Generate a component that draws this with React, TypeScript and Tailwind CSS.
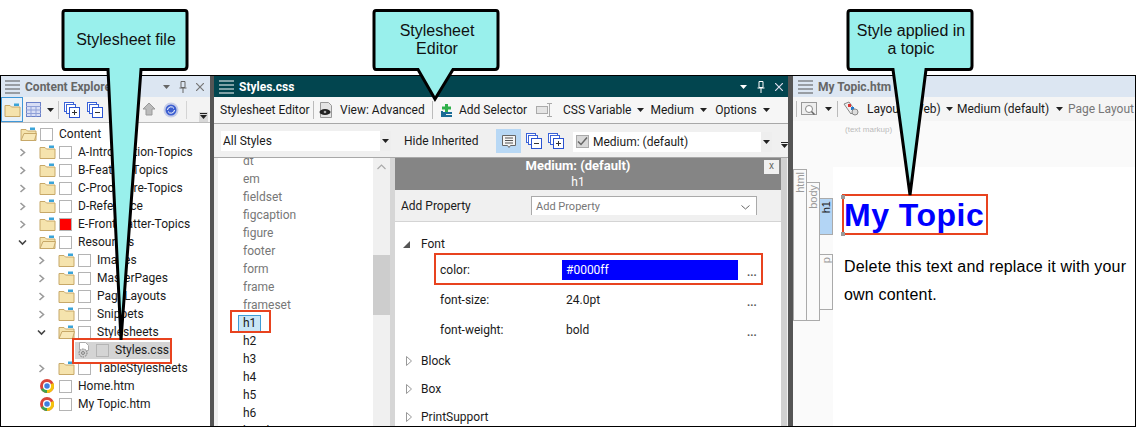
import React from 'react';

const ui = "font-['Roboto','Noto_Sans',sans-serif]";

const Folder = ({ open = false }: { open?: boolean }) => (
  <svg width="17" height="14" viewBox="0 0 17 14" className="shrink-0">
    <path d="M1 2.500h5l1.500 1.500H16v9.500H1z" fill="#f5e3ad" stroke="#c7a868" />
    {open && <path d="M1 13.500l3-7h12.500l-2 7z" fill="#f8e8b8" stroke="#c7a868" />}
    <rect x="10" y="0.500" width="5" height="2.500" fill="#3ba4d8" />
  </svg>
);

const Chevron = ({ down = false }: { down?: boolean }) => (
  <svg width="9" height="9" viewBox="0 0 9 9" className="shrink-0">
    {down ? (
      <path d="M1 2.500l3.500 3.500L8 2.500" fill="none" stroke="#444" strokeWidth="1.600" />
    ) : (
      <path d="M2.500 1L6.500 4.500 2.500 8" fill="none" stroke="#9a9a9a" strokeWidth="1.600" />
    )}
  </svg>
);

const Chrome = () => (
  <svg width="14" height="14" viewBox="0 0 14 14" className="shrink-0">
    <circle cx="7" cy="7" r="7" fill="#d9453a" />
    <path d="M7 7L1 10.500A7 7 0 0 0 7 14z" fill="#3fa34d" />
    <path d="M7 7l6.400-3A7 7 0 0 1 7 14z" fill="#f4c20d" />
    <circle cx="7" cy="7" r="3.400" fill="#3f7fe0" stroke="#fff" strokeWidth="1.300" />
  </svg>
);

const StackIcon = ({ sign }: { sign: '+' | '-' }) => (
  <svg width="16" height="16" viewBox="0 0 16 16" className="block shrink-0">
    <rect x="0.500" y="0.500" width="9" height="9" fill="#fff" stroke="#3a62d8" />
    <rect x="2.500" y="2.500" width="9" height="9" fill="#fff" stroke="#3a62d8" />
    <rect x="5.500" y="5.500" width="10" height="10" fill="#fff" stroke="#2a52d0" />
    <path d={sign === '+' ? 'M8 10.500h5M10.500 8v5' : 'M8 10.500h5'} stroke="#333" />
  </svg>
);

const Caret = ({ color = '#222' }: { color?: string }) => (
  <svg width="7" height="4" viewBox="0 0 7 4" className="block shrink-0">
    <path d="M0 0h7L3.500 4z" fill={color} />
  </svg>
);

const Hamburger = ({ color }: { color: string }) => (
  <svg width="15" height="14" viewBox="0 0 15 14" className="shrink-0">
    <path d="M0 1h15M0 5h15M0 9h15M0 13h15" stroke={color} />
  </svg>
);

const Overflow = () => (
  <svg width="7" height="7" viewBox="0 0 7 7" className="block shrink-0">
    <path d="M0 0h7v1H0zM0 2h7L3.500 6z" fill="#222" />
  </svg>
);

const Check = ({ fill }: { fill?: string }) => (
  <span className={`block w-[13px] h-[13px] border border-[#b4b4b4] shrink-0 ${fill ?? 'bg-white'}`} />
);

const tree = [
  { label: 'Content', depth: 0, open: true, noChevron: true },
  { label: 'A-Introduction-Topics', depth: 1 },
  { label: 'B-Feature-Topics', depth: 1 },
  { label: 'C-Procedure-Topics', depth: 1 },
  { label: 'D-Reference', depth: 1 },
  { label: 'E-FrontMatter-Topics', depth: 1, red: true },
  { label: 'Resources', depth: 1, open: true, expanded: true },
  { label: 'Images', depth: 2 },
  { label: 'MasterPages', depth: 2 },
  { label: 'PageLayouts', depth: 2 },
  { label: 'Snippets', depth: 2 },
  { label: 'Stylesheets', depth: 2, open: true, expanded: true },
];

const paddings = ['pl-[19px]', 'pl-[17px]', 'pl-[36px]'];

const TreeRow = ({ row }: { row: (typeof tree)[number] }) => (
  <div className={`h-[18px] flex items-center ${paddings[row.depth]}`}>
    {!row.noChevron && (
      <span className="w-[21px] flex shrink-0">
        <Chevron down={row.expanded} />
      </span>
    )}
    <Folder open={row.open} />
    <span className="w-[3px] shrink-0" />
    <Check fill={row.red ? 'bg-[#ff0000]' : undefined} />
    <span className="ml-[6px] whitespace-nowrap">{row.label}</span>
  </div>
);

const ContentExplorer = () => (
  <div className="w-[209px] shrink-0 flex flex-col text-[12px] text-[#1a1a1a] bg-white">
    <div className="h-[21px] bg-[#dce6f2] flex items-center pl-[4px] pr-[6px]">
      <Hamburger color="#555" />
      <span className="ml-[5px] font-bold text-[#666] whitespace-nowrap">Content Explorer</span>
      <span className="ml-auto flex items-center gap-[9px] text-[#666]">
        <Caret color="#666" />
        <svg width="8" height="12" viewBox="0 0 8 12">
          <path d="M2 .5h4v6H2zM.5 7h7M4 7v5" fill="none" stroke="#666" />
        </svg>
        <svg width="8" height="8" viewBox="0 0 8 8">
          <path d="M0 0l8 8M8 0L0 8" stroke="#777" strokeWidth="1.200" />
        </svg>
      </span>
    </div>
    <div className="h-[26px] bg-[#f3f3f3] flex items-center border-b border-[#bdbdbd] pr-[1px]">
      <span className="w-[22px] h-[25px] border border-[#3f97d8] bg-[#e8f1f9] flex items-center justify-center shrink-0">
        <Folder />
      </span>
      <svg width="15" height="15" viewBox="0 0 15 15" className="ml-[3px] shrink-0">
        <rect x="0.500" y="0.500" width="14" height="14" fill="#d8def5" stroke="#6a80c8" />
        <path d="M0 4.500h15M0 8h15M0 11.500h15M5 4v11M10 4v11" stroke="#8fa0d8" />
      </svg>
      <span className="ml-[6px]"><Caret /></span>
      <span className="ml-[4px] w-px h-[18px] bg-[#c4c4c4]" />
      <span className="ml-[5px]"><StackIcon sign="+" /></span>
      <span className="ml-[7px]"><StackIcon sign="-" /></span>
      <span className="ml-[6px]"><StackIcon sign="+" /></span>
      <span className="ml-[16px]">
        <svg width="16" height="16" viewBox="0 0 16 16" className="block">
          <path d="M8 1l6 6h-3v6H5V7H2z" fill="#bbb" stroke="#999" />
        </svg>
      </span>
      <span className="ml-[6px]">
        <svg width="16" height="16" viewBox="0 0 16 16" className="block">
          <circle cx="8" cy="8" r="7.500" fill="#c6cde8" />
          <circle cx="8" cy="8" r="5.500" fill="#3d5fd0" />
          <path d="M4.500 8a3.500 3.500 0 0 1 6.500-1.500M11.500 8a3.500 3.500 0 0 1-6.500 1.500" fill="none" stroke="#fff" />
        </svg>
      </span>
      <span className="ml-[7px] w-px h-[18px] bg-[#d4d4d4]" />
      <span className="ml-auto mt-[14px] mr-[1px] w-[9px] h-[10px] bg-[#d8d8d8] flex items-center justify-center"><Overflow /></span>
    </div>
    <div className="flex-1 pt-[2px]">
      {tree.map((row) => (
        <TreeRow key={row.label} row={row} />
      ))}
      <div className="h-[18px] flex items-center pl-[74px]">
        <div className="h-[17px] w-[95px] bg-[#d4d4d4] flex items-center">
          <svg width="14" height="16" viewBox="0 0 14 16" className="shrink-0 ml-[2px]">
            <path d="M2.500.5h6l3 3v5h-9z" fill="#fff" stroke="#aaa" />
            <circle cx="6" cy="11" r="4" fill="#cfcfcf" stroke="#777" strokeDasharray="1.500 1" />
            <circle cx="6" cy="11" r="1.400" fill="#eee" stroke="#777" />
          </svg>
          <span className="ml-[5px]"><Check fill="bg-[#d4d4d4]" /></span>
          <span className="ml-[6px] whitespace-nowrap">Styles.css</span>
        </div>
      </div>
      <TreeRow row={{ label: 'TableStylesheets', depth: 2 }} />
      {['Home.htm', 'My Topic.htm'].map((f) => (
        <div key={f} className="h-[18px] flex items-center pl-[39px]">
          <Chrome />
          <span className="ml-[5px]"><Check /></span>
          <span className="ml-[6px] whitespace-nowrap">{f}</span>
        </div>
      ))}
    </div>
  </div>
);

const ToolMenu = ({ label, className = '' }: { label: string; className?: string }) => (
  <span className={`flex items-center gap-[6px] whitespace-nowrap ${className}`}>
    {label}
    <Caret />
  </span>
);

const styleNames = ['dt', 'em', 'fieldset', 'figcaption', 'figure', 'footer', 'form', 'frame', 'frameset'];
const usedNames = ['h2', 'h3', 'h4', 'h5', 'h6', 'head'];

const Prop = ({ name, value, blue = false }: { name: string; value: string; blue?: boolean }) => (
  <div className="h-[30px] flex items-center pl-[45px]">
    <span className="w-[122px] shrink-0">{name}</span>
    <span className={`w-[176px] h-[20px] pl-[4px] flex items-center shrink-0 ${blue ? 'bg-[#0000ff] text-white' : ''}`}>{value}</span>
    <span className="ml-[9px] text-[11px] text-[#555] font-bold leading-none mt-[4px]">...</span>
  </div>
);

const Section = ({ label }: { label: string }) => (
  <div className="h-[28px] flex items-center pl-[11px]">
    <svg width="7" height="10" viewBox="0 0 7 10" className="shrink-0">
      <path d="M.5.5l5 4.500-5 4.500z" fill="#fff" stroke="#999" />
    </svg>
    <span className="ml-[8px]">{label}</span>
  </div>
);

const StylesheetEditor = () => (
  <div className="w-[574px] shrink-0 flex flex-col text-[12px] text-[#1a1a1a] bg-[#f0f0f0] overflow-hidden">
    <div className="h-[21px] bg-[#02454f] flex items-center pl-[5px] pr-[5px] text-white">
      <Hamburger color="#fff" />
      <span className="ml-[5px] font-bold">Styles.css</span>
      <span className="ml-auto flex items-center gap-[10px]">
        <Caret color="#fff" />
        <svg width="8" height="12" viewBox="0 0 8 12">
          <path d="M2 .5h4v6H2zM.5 7h7M4 7v5" fill="none" stroke="#fff" />
        </svg>
        <svg width="8" height="8" viewBox="0 0 8 8">
          <path d="M0 0l8 8M8 0L0 8" stroke="#dde" strokeWidth="1.200" />
        </svg>
      </span>
    </div>
    <div className="h-[27px] bg-[#f6f6f6] border-b border-[#a8a8a8] flex items-center pl-[6px]">
      <span className="w-[93px] whitespace-nowrap shrink-0">Stylesheet Editor</span>
      <span className="w-px h-[18px] bg-[#bbb]" />
      <svg width="14" height="16" viewBox="0 0 14 16" className="ml-[5px] shrink-0">
        <path d="M1.500.5h8l3 3v12h-11z" fill="#e4e4e4" stroke="#999" />
        <ellipse cx="6" cy="10" rx="5.500" ry="3" fill="#222" />
        <circle cx="6" cy="10" r="1.300" fill="#aaa" />
      </svg>
      <span className="ml-[7px] w-[84px] whitespace-nowrap shrink-0">View: Advanced</span>
      <span className="ml-[8px] w-px h-[18px] bg-[#bbb]" />
      <svg width="12" height="13" viewBox="0 0 12 13" className="ml-[8px] shrink-0">
        <path d="M2 8h9v2H5v1h6v2H0V7h2z" fill="#1a6c96" />
        <path d="M4 0h3v2.500h3v3H7V8H4V5.500H1v-3h3z" fill="#2fb04a" />
      </svg>
      <span className="ml-[6px] w-[68px] whitespace-nowrap shrink-0">Add Selector</span>
      <svg width="17" height="14" viewBox="0 0 17 14" className="ml-[9px] shrink-0">
        <rect x="0.500" y="3.500" width="11" height="7" fill="#e4e4e4" stroke="#aaa" />
        <path d="M11 .5h5M13.500 .5v13M11 13.500h5" stroke="#aaa" fill="none" />
      </svg>
      <ToolMenu label="CSS Variable" className="ml-[10px]" />
      <ToolMenu label="Medium" className="ml-[6px]" />
      <ToolMenu label="Options" className="ml-[8px]" />
    </div>
    <div className="h-[34px] bg-[#f0f0f0] border-b border-[#a8a8a8] flex items-center pl-[7px] relative">
      <span className="w-[170px] h-[20px] bg-white flex items-center pl-[2px] shrink-0">
        All Styles
        <span className="ml-auto w-[11px] h-full bg-[#eee] flex items-center justify-center"><Caret /></span>
      </span>
      <span className="ml-[13px] w-[76px] whitespace-nowrap shrink-0">Hide Inherited</span>
      <span className="ml-[16px] w-[25px] h-[24px] bg-[#b8d8f5] flex items-center justify-center shrink-0">
        <svg width="14" height="16" viewBox="0 0 14 16">
          <path d="M.5 2.500h13v10h-5l-1.500 2-1.500-2h-5z" fill="#f4f4f4" stroke="#666" />
          <path d="M3 5h8M3 7.500h8M3 10h8" stroke="#555" />
        </svg>
      </span>
      <span className="ml-[5px]"><StackIcon sign="-" /></span>
      <span className="ml-[6px]"><StackIcon sign="+" /></span>
      <span className="ml-[9px] mt-[2px] w-[199px] h-[20px] bg-white flex items-center pl-[3px] shrink-0">
        <span className="w-[13px] h-[13px] bg-[#d8d8d8] border border-[#aaa] flex items-center justify-center">
          <svg width="11" height="9" viewBox="0 0 11 9">
            <path d="M1 4.500l3 3 6-7" fill="none" stroke="#666" strokeWidth="1.500" />
          </svg>
        </span>
        <span className="ml-[4px]">Medium: (default)</span>
        <span className="ml-auto w-[11px] h-full bg-[#eee] flex items-center justify-center"><Caret /></span>
      </span>
      <span className="ml-[9px] mt-[10px]"><Overflow /></span>
    </div>
    <div className="flex-1 flex min-h-0">
      <div className="w-[4px] bg-[#f0f0f0] shrink-0" />
      <div className="w-[155px] bg-white shrink-0 pl-[25px] overflow-hidden -mt-[6px]">
        {styleNames.map((n) => (
          <div key={n} className="h-[18px] flex items-center text-[#777]">{n}</div>
        ))}
        <div className="h-[18px] flex items-center">
          <span className="w-[23px] h-[17px] bg-[#c9e6f7] border border-[#3f9bd6] pl-[4px] flex items-center -ml-[5px]">h1</span>
        </div>
        {usedNames.map((n) => (
          <div key={n} className="h-[18px] flex items-center">{n}</div>
        ))}
      </div>
      <div className="w-[17px] bg-[#f0f0f0] shrink-0 flex flex-col items-center">
        <svg width="9" height="6" viewBox="0 0 9 6" className="mt-[6px] shrink-0">
          <path d="M.5 5l4-4 4 4" fill="none" stroke="#aaa" strokeWidth="1.200" />
        </svg>
        <div className="w-full h-[60px] bg-[#cdcdcd] mt-[85px]" />
      </div>
      <div className="w-[5px] bg-[#d6d6d6] shrink-0" />
      <div className="w-[386px] shrink-0 bg-white flex flex-col">
        <div className="h-[32px] bg-[#858585] text-white relative flex flex-col items-center justify-center pr-[20px] leading-[16px] shrink-0">
          <span className="font-bold text-[13px]">Medium: (default)</span>
          <span>h1</span>
          <span className="absolute right-[2px] top-[2px] w-[15px] h-[14px] bg-[#f0f0f0] text-[#666] text-[10px] leading-[12px] text-center">x</span>
        </div>
        <div className="h-[32px] bg-[#f0f0f0] border-b border-[#d4d4d4] flex items-center pl-[6px] shrink-0">
          <span className="w-[66px] whitespace-nowrap shrink-0">Add Property</span>
          <span className="ml-[64px] w-[226px] h-[19px] pt-[2px] bg-white border border-b-0 border-[#aaa] flex items-center pl-[4px] pr-[6px] text-[#777] text-[11px]">
            Add Property
            <svg width="9" height="5" viewBox="0 0 9 5" className="ml-auto">
              <path d="M.5.5l4 3.500 4-3.500" fill="none" stroke="#666" />
            </svg>
          </span>
        </div>
        <div className="pt-[11px]">
          <div className="h-[22px] flex items-center pl-[8px]">
            <svg width="7" height="7" viewBox="0 0 7 7" className="shrink-0">
              <path d="M7 0v7H0z" fill="#555" />
            </svg>
            <span className="ml-[11px]">Font</span>
          </div>
          <Prop name="color:" value="#0000ff" blue />
          <Prop name="font-size:" value="24.0pt" />
          <Prop name="font-weight:" value="bold" />
          <div className="h-[2px]" />
          <Section label="Block" />
          <Section label="Box" />
          <Section label="PrintSupport" />
        </div>
      </div>
      <div className="w-[6px] bg-[#d0d0d0] shrink-0" />
    </div>
  </div>
);

const VTab = ({ label, className = '' }: { label: string; className?: string }) => (
  <div className={`w-[14px] border border-[#aaa] flex justify-center items-start pt-[2px] text-[11px] leading-[12px] ${className}`}>
    <span className="[writing-mode:vertical-rl] rotate-180">{label}</span>
  </div>
);

const TopicPane = () => (
  <div className="flex-1 flex flex-col bg-white min-w-0 font-['Liberation_Sans',sans-serif] overflow-hidden">
    <div className={`h-[21px] bg-[#dce6f2] flex items-center pl-[5px] text-[12px] ${ui}`}>
      <Hamburger color="#555" />
      <span className="ml-[5px] font-bold text-[#666]">My Topic.htm</span>
    </div>
    <div className={`h-[24px] bg-[#f5f5f5] flex items-center pl-[3px] text-[12px] text-[#1a1a1a] whitespace-nowrap ${ui}`}>
      <span className="w-px h-[16px] bg-[#bbb]" />
      <svg width="16" height="14" viewBox="0 0 16 14" className="ml-[4px] shrink-0">
        <rect x="0.500" y="0.500" width="15" height="12" fill="#eee" stroke="#999" />
        <circle cx="8" cy="7" r="3.500" fill="#fff" stroke="#888" />
        <path d="M10.500 9.500l3 3" stroke="#666" strokeWidth="1.500" />
      </svg>
      <span className="ml-[8px]"><Caret /></span>
      <span className="ml-[5px] w-px h-[16px] bg-[#bbb]" />
      <svg width="16" height="16" viewBox="0 0 16 16" className="ml-[5px] shrink-0">
        <path d="M1 3l5-2 6 8-4 4z" fill="#eee" stroke="#888" />
        <rect x="5" y="3" width="3" height="3" fill="#d33" />
        <rect x="8" y="6" width="3" height="3" fill="#27c" />
        <circle cx="12" cy="11" r="3" fill="#ddd" stroke="#888" />
      </svg>
      <span className="ml-[8px] w-[74px] shrink-0">Layout: (Web)</span>
      <span className="ml-[5px]"><Caret /></span>
      <span className="ml-[4px] w-[92px] shrink-0">Medium (default)</span>
      <span className="ml-[7px]"><Caret /></span>
      <span className="ml-[5px] text-[#777]">Page Layout</span>
    </div>
    <div className="h-[46px] bg-[#fafafa] pl-[52px] pt-[3px] text-[8px] text-[#bbb] shrink-0">(text markup)</div>
    <div className="flex-1 flex min-h-0">
      <div className="w-[40px] bg-[#fafafa] shrink-0 flex items-start text-[#999]">
        <VTab label="html" className="h-[152px] mt-[2px]" />
        <VTab label="body" className="h-[139px] mt-[15px] -ml-px" />
        <div className="flex flex-col -ml-px">
          <VTab label="h1" className="h-[37px] mt-[31px] bg-[#b3d5f5] text-[#222]" />
          <VTab label="p" className="h-[56px] mt-[19px]" />
        </div>
      </div>
      <div className="flex-1 pl-[11px] pt-[30px] text-black">
        <h1 className="text-[32px] font-bold leading-[37px] tracking-[0.5px] text-[#0000ff] whitespace-nowrap">My Topic</h1>
        <p className="mt-[19px] text-[16px] leading-[28px] tracking-[0.18px]">Delete this text and replace it with your own content.</p>
      </div>
    </div>
  </div>
);

// callout shapes sit over the app, coordinates are relative to the page
const Callout = ({ x, tipX, tipY, baseL, baseR, lines }: { x: number; tipX: number; tipY: number; baseL: number; baseR: number; lines: string[] }) => {
  const w = 126;
  const d = `M${x + 3} 10.500H${x + w - 3}Q${x + w - 1} 10.500 ${x + w - 1} 13V66Q${x + w - 1} 69.500 ${x + w - 4} 69.500H${baseR}L${tipX} ${tipY}L${baseL} 69.500H${x + 3}Q${x + 1} 69.500 ${x + 1} 66V13Q${x + 1} 10.500 ${x + 3} 10.500Z`;
  return (
    <>
      <svg width="1136" height="427" viewBox="0 0 1136 427" className="absolute left-0 top-0 pointer-events-none">
        <path d={d} fill="#99f0ec" stroke="#000" strokeWidth="3" strokeLinejoin="miter" />
      </svg>
      <div
        className="absolute top-[11px] h-[58px] w-[124px] flex flex-col items-center justify-center font-['Liberation_Sans',sans-serif] text-[16px] leading-[18px] text-[#111]"
        style={{ left: x + 2 }}
      >
        {lines.map((l) => (
          <span key={l} className="whitespace-nowrap">{l}</span>
        ))}
      </div>
    </>
  );
};

export default function App() {
  return (
    <div className={`relative w-[1136px] h-[427px] bg-white overflow-hidden ${ui}`}>
      <div className="pt-[75px] h-full">
        <div className="h-[352px] border-t border-b border-black flex bg-[#555]">
          <div className="w-px bg-black shrink-0" />
          <ContentExplorer />
          <div className="w-[4px] bg-[#555] shrink-0" />
          <StylesheetEditor />
          <div className="w-[5px] bg-[#555] shrink-0" />
          <TopicPane />
          <div className="w-px bg-black shrink-0" />
        </div>
      </div>

      {/* red highlight boxes */}
      <div className="absolute left-[72px] top-[338px] w-[100px] h-[26px] border-[2px] border-[#e8431f]" />
      <div className="absolute left-[230px] top-[310px] w-[41px] h-[23px] border-[2px] border-[#e8431f]" />
      <div className="absolute left-[434px] top-[253px] w-[329px] h-[32px] border-[2px] border-[#e8431f]" />
      <div className="absolute left-[842px] top-[194px] w-[146px] h-[41px] border-[2px] border-[#e8431f]" />
      <div className="absolute left-[841px] top-[195px] w-[4px] h-[4px] bg-[#999]" />
      <div className="absolute left-[841px] top-[232px] w-[4px] h-[4px] bg-[#999]" />

      <Callout x={62} baseL={108} baseR={141} tipX={121} tipY={340} lines={['Stylesheet file']} />
      <Callout x={373} baseL={418} baseR={453} tipX={435} tipY={99} lines={['Stylesheet', 'Editor']} />
      <Callout x={847} baseL={893} baseR={926} tipX={910} tipY={195} lines={['Style applied in', 'a topic']} />
    </div>
  );
}
